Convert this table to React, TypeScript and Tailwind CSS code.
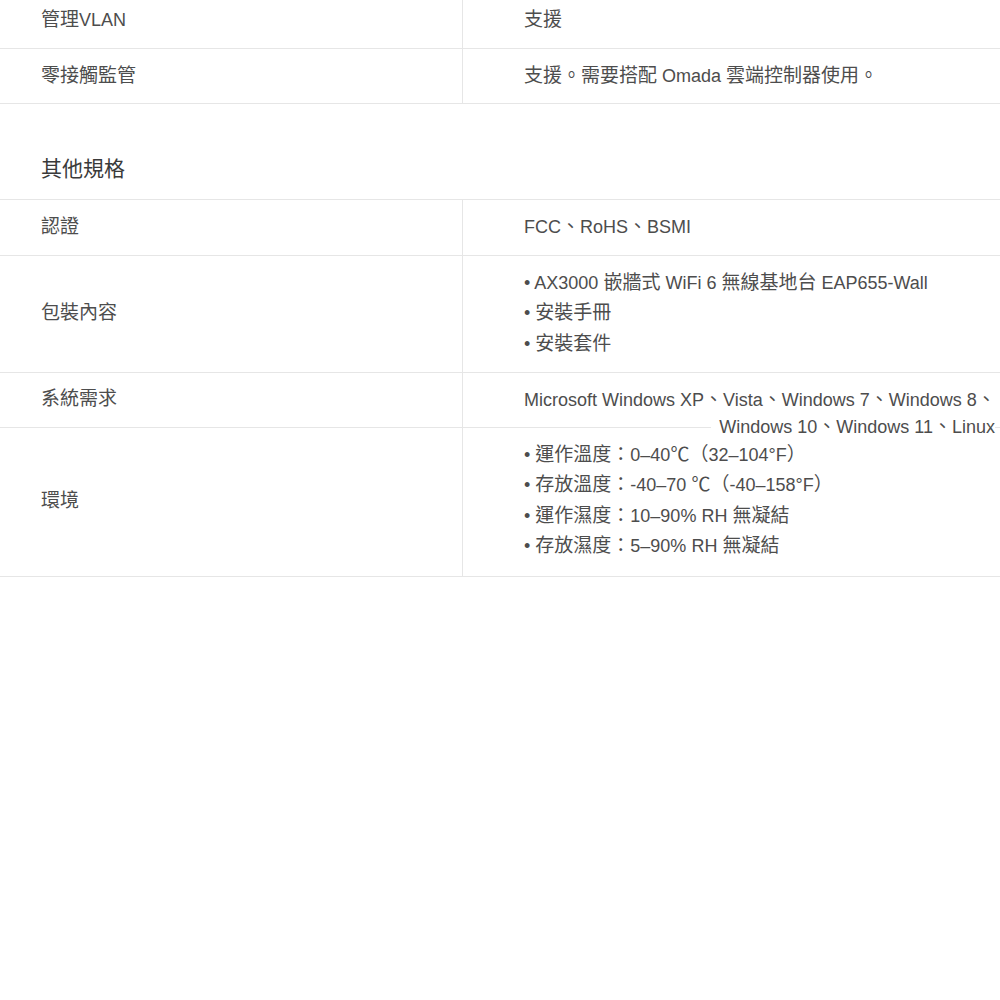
const fontStack = {
    fontFamily: '"Liberation Sans", "Noto Sans CJK TC", Arial, sans-serif',
}

// CJK glyphs in the shot run a touch bigger than the latin text
const Txt = ({ text }: { text: string }) => {
    const parts = text.split(/([\u3000-\u303f\u3400-\u9fff\uff00-\uffef\u2103]+)/)
    return (
        <>
            {parts.map((part, index) =>
                index % 2 === 1 ? (
                    <span key={index} className="text-[19px]">
                        {part}
                    </span>
                ) : (
                    <span key={index}>{part}</span>
                )
            )}
        </>
    )
}

type SpecRow = {
    label: string
    lines: string[]
}

const Row = ({ label, lines, first }: SpecRow & { first?: boolean }) => {
    return (
        <div className="grid grid-cols-[462px_1fr] border-b border-[#e6e6e6]">
            <div className={`flex items-center pl-[41px] ${first ? 'pt-[5px] pb-3' : 'py-3'}`}>
                <Txt text={label} />
            </div>
            <div className={`border-l border-[#e6e6e6] pl-[61px] ${first ? 'pt-[5px] pb-3' : 'py-3'}`}>
                {lines.map((line, index) => (
                    <div key={index} className="whitespace-nowrap">
                        <Txt text={line} />
                    </div>
                ))}
            </div>
        </div>
    )
}

export default function App() {
    return (
        <div
            className="w-full min-h-[1000px] overflow-hidden bg-white text-[18px] leading-[30.6px] text-[#4d4d4d]"
            style={fontStack}
        >
            <Row first label="管理VLAN" lines={['支援']} />
            <Row label="零接觸監管" lines={['支援。需要搭配 Omada 雲端控制器使用。']} />

            <div className="border-b border-[#e6e6e6] pl-[41px] pt-[50px] pb-[15px] text-[21px] leading-[30px] text-[#3a3a3a]">
                其他規格
            </div>

            <Row label="認證" lines={['FCC、RoHS、BSMI']} />
            <Row
                label="包裝內容"
                lines={[
                    '• AX3000 嵌牆式 WiFi 6 無線基地台 EAP655-Wall',
                    '• 安裝手冊',
                    '• 安裝套件',
                ]}
            />

            {/* fixed height row, second line spills over the next border */}
            <div className="grid h-[55px] grid-cols-[462px_1fr] grid-rows-[54px] border-b border-[#e6e6e6]">
                <div className="flex items-center pl-[41px]">
                    <Txt text="系統需求" />
                </div>
                <div className="relative z-10 border-l border-[#e6e6e6] pt-3 pl-[61px]">
                    <div className="whitespace-nowrap">
                        <Txt text="Microsoft Windows XP、Vista、Windows 7、Windows 8、" />
                    </div>
                    <div className="-mt-[3px] whitespace-nowrap pr-[5px] text-right">
                        <span className="bg-white pl-2">
                            <Txt text="Windows 10、Windows 11、Linux" />
                        </span>
                    </div>
                </div>
            </div>

            <div className="grid grid-cols-[462px_1fr] border-b border-[#e6e6e6]">
                <div className="flex items-center pl-[41px]">
                    <Txt text="環境" />
                </div>
                <div className="border-l border-[#e6e6e6] pt-3 pb-[14px] pl-[61px]">
                    {[
                        '• 運作溫度：0–40℃（32–104°F）',
                        '• 存放溫度：-40–70 ℃（-40–158°F）',
                        '• 運作濕度：10–90% RH 無凝結',
                        '• 存放濕度：5–90% RH 無凝結',
                    ].map((line, index) => (
                        <div key={index} className="whitespace-nowrap">
                            <Txt text={line} />
                        </div>
                    ))}
                </div>
            </div>
        </div>
    )
}
